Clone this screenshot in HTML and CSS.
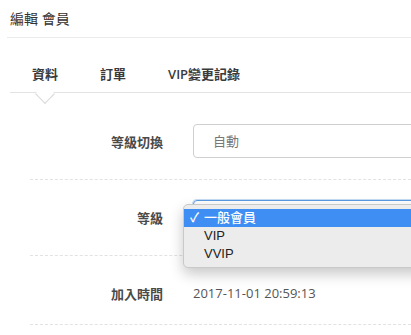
FILE: index.html
```html
<!DOCTYPE html>
<html lang="zh-Hant">
<head>
<meta charset="utf-8">
<title>編輯 會員</title>
<link rel="stylesheet" href="styles.css">
</head>
<body>
<div class="page">
  <header class="header">編輯 會員</header>
  <nav class="tabs">
    <span class="tab tab--active">資料<span class="caret"></span></span>
    <span class="tab">訂單</span>
    <span class="tab">VIP變更記錄</span>
  </nav>
  <div class="form">
    <div class="row">
      <div class="label">等級切換</div>
      <div class="field"><div class="input">自動</div></div>
    </div>
    <div class="row">
      <div class="label">等級</div>
      <div class="field">
        <div class="input input--focus"></div>
        <ul class="menu">
          <li class="menu-item menu-item--selected"><span class="check">✓</span>一般會員</li>
          <li class="menu-item">VIP</li>
          <li class="menu-item">VVIP</li>
        </ul>
      </div>
    </div>
    <div class="row row--text">
      <div class="label">加入時間</div>
      <div class="field"><div class="text">2017-11-01 20:59:13</div></div>
    </div>
  </div>
</div>
</body>
</html>
```

FILE: styles.css
```css
html, body {
  margin: 0;
  padding: 0;
  background: #fff;
  overflow: hidden;
}
.page {
  width: 411px;
  height: 335px;
  overflow: hidden;
  font-family: "Open Sans", "Noto Sans CJK TC", sans-serif;
  color: #555;
}
.header {
  margin-left: 7px;
  padding-left: 3px;
  height: 37px;
  line-height: 38px;
  font-size: 14px;
  color: #333;
  border-bottom: 1px solid #ebebeb;
}
.tabs {
  margin-left: 10px;
  padding: 26px 0 8px 22px;
  display: flex;
  gap: 42px;
  border-bottom: 1px solid #e3e3e3;
  line-height: 20px;
}
.tab {
  position: relative;
  font-size: 13px;
  font-weight: 600;
  color: #3a3a3a;
}
.caret {
  position: absolute;
  left: 50%;
  top: 23px;
  width: 13px;
  height: 13px;
  margin-left: -7px;
  background: #fff;
  border-right: 1px solid #d8d8d8;
  border-bottom: 1px solid #d8d8d8;
  transform: rotate(45deg);
}
.form {
  padding-top: 11px;
}
.row {
  margin-left: 30px;
  padding: 20px 0 21px;
  display: flex;
  align-items: center;
  gap: 30px;
  border-bottom: 1px dashed #e2e2e2;
}
.row--text {
  padding-bottom: 14px;
}
.label {
  width: 133px;
  text-align: right;
  font-size: 13px;
  font-weight: 600;
  color: #4a4a4a;
  flex: none;
}
.field {
  position: relative;
  flex: 1;
  min-width: 0;
  height: 34px;
  display: flex;
  align-items: center;
}
.input {
  box-sizing: border-box;
  width: 240px;
  height: 34px;
  border: 1px solid #cfcfcf;
  border-radius: 4px;
  padding-left: 19px;
  line-height: 32px;
  font-size: 13px;
  color: #777;
  flex: none;
}
.input--focus {
  border-color: #5b9ae0;
  box-shadow: 0 0 0 1px rgba(91, 154, 224, 0.35);
}
.text {
  font-size: 13px;
  color: #555;
}
.menu {
  position: absolute;
  left: -10px;
  top: 4px;
  width: 260px;
  margin: 0;
  padding: 4px 0;
  list-style: none;
  background: #ececec;
  border: 1px solid #c9c9c9;
  border-radius: 5px;
  box-shadow: 0 6px 14px rgba(0, 0, 0, 0.22);
  font-family: "Liberation Sans", "Noto Sans CJK TC", sans-serif;
  font-size: 13px;
  color: #222;
}
.menu-item {
  height: 18px;
  line-height: 18px;
  padding-left: 20px;
  position: relative;
}
.menu-item--selected {
  background: #3e8ef4;
  color: #fff;
  font-weight: 500;
}
.check {
  position: absolute;
  left: 6px;
  top: 0;
}
```
